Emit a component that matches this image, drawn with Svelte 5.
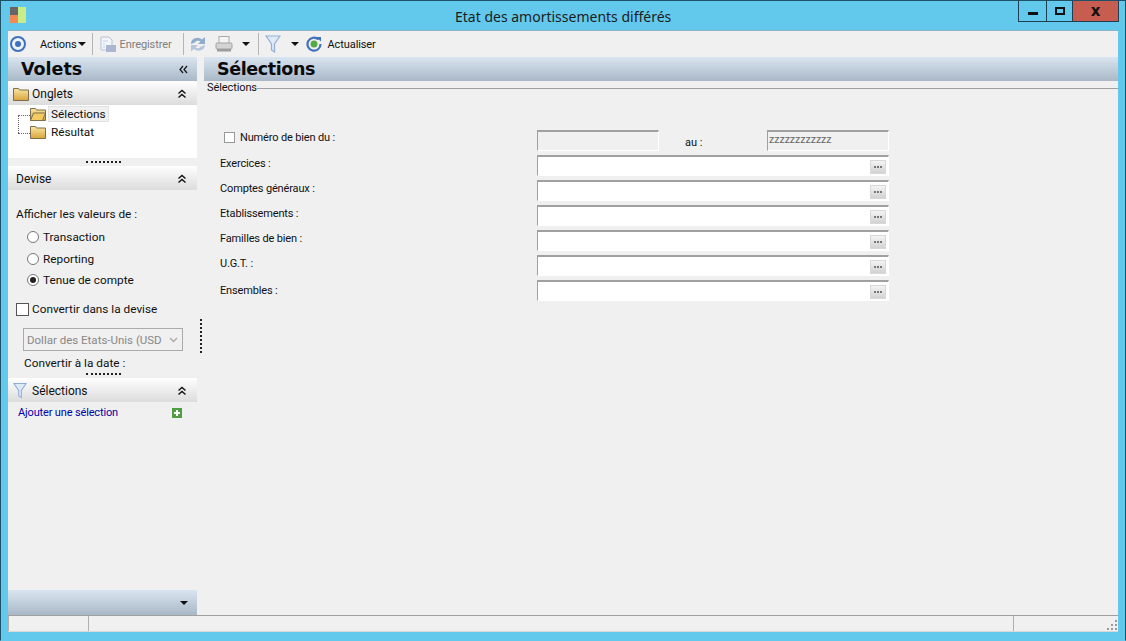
<script>
  const rows = ['Exercices :', 'Comptes généraux :', 'Etablissements :', 'Familles de bien :', 'U.G.T. :', 'Ensembles :'];
  const radios = [
    { label: 'Transaction', on: false },
    { label: 'Reporting', on: false },
    { label: 'Tenue de compte', on: true }
  ];
</script>

{#snippet chevrons()}
  <svg class="chev" width="10" height="10" viewBox="0 0 10 10"><path d="M1.500 4.500 5 1.500 8.500 4.500M1.500 8.500 5 5.500 8.500 8.500" fill="none" stroke="#111" stroke-width="1.400"/></svg>
{/snippet}
{#snippet folder(open)}
  <svg width="16" height="14" viewBox="0 0 16 14">
    <defs><linearGradient id="fg" x1="0" y1="0" x2="0" y2="1"><stop offset="0" stop-color="#f9e6a4"/><stop offset="1" stop-color="#d9a53a"/></linearGradient></defs>
    <path d="M.5 1.500h5l1 1.500h9v10.500H.5z" fill="url(#fg)" stroke="#7d6d4a"/>
    {#if open}<path d="M3.500 6h12l-3 7.500H.5z" fill="#f4cb62" stroke="#7d6d4a"/>{/if}
  </svg>
{/snippet}
{#snippet funnel(w, h)}
  <svg width={w} height={h} viewBox="0 0 16 18"><path d="M1 1h14L9.500 9v8l-3-2V9z" fill="#dfeaf6" stroke="#8fb0d6" stroke-width="1.200"/></svg>
{/snippet}
{#snippet caret()}
  <span class="caret"></span>
{/snippet}

<div class="window">
  <header class="titlebar">
    <svg class="logo" width="16" height="16" viewBox="0 0 16 16">
      <rect x="0" y="0" width="8" height="8" fill="#666"/>
      <rect x="0" y="8" width="8" height="8" fill="#f08a50"/>
      <rect x="8" y="0" width="8" height="16" fill="#c8ec88"/>
    </svg>
    <span class="title">Etat des amortissements différés</span>
    <div class="controls">
      <div class="ctl min"><span></span></div>
      <div class="ctl max"><span></span></div>
      <div class="ctl close">x</div>
    </div>
  </header>

  <div class="client">
    <nav class="toolbar">
      <svg class="home" width="18" height="18" viewBox="0 0 18 18"><circle cx="9" cy="9" r="7" fill="#eef3fb" stroke="#3f70bd" stroke-width="2"/><circle cx="9" cy="9" r="3" fill="#3f70bd"/></svg>
      <span class="tb actions">Actions</span>
      {@render caret()}
      <i class="sep s1"></i>
      <svg class="save" width="16" height="17" viewBox="0 0 16 17"><path d="M1 1h8l3 3v10H1z" fill="#f2f5fa" stroke="#b6c2d4"/><rect x="6" y="9" width="10" height="7" fill="#aab6d2"/><path d="M3 5h5M3 8h2M3 11h2" stroke="#c3cede"/></svg>
      <span class="tb disabled">Enregistrer</span>
      <i class="sep s2"></i>
      <svg class="sync" width="16" height="16" viewBox="0 0 16 16"><path d="M1 8a6.500 6 0 0 1 11-4.500L15 1v7H8l2.500-2.500a3.500 3 0 0 0-5.500 1z" fill="#8eaccc"/><path d="M15 9a6.500 6 0 0 1-11 4l-3 2.500V9h7l-2.500 2.500a3.500 3 0 0 0 5.500-1z" fill="#b4c6da"/></svg>
      <svg class="print" width="18" height="18" viewBox="0 0 18 18"><rect x="4" y="1.500" width="10" height="7" fill="#f4f4f4" stroke="#aaa"/><rect x="1" y="8" width="16" height="6" rx="1" fill="#d4d4d4" stroke="#a4a4a4"/><rect x="2" y="14" width="14" height="2.500" fill="#9c9c9c"/></svg>
      {@render caret()}
      <i class="sep s3"></i>
      <span class="tfun">{@render funnel(16, 18)}</span>
      {@render caret()}
      <svg class="refresh" width="16" height="16" viewBox="0 0 16 16"><path d="M12.500 3.500A6.500 6.500 0 1 0 14.500 8" fill="none" stroke="#3f70bd" stroke-width="2.200"/><path d="M10 1h5v4.500z" fill="#3f70bd"/><circle cx="8" cy="8" r="3.500" fill="#57a846"/></svg>
      <span class="tb refresh-label">Actualiser</span>
    </nav>

    <div class="body">
      <aside class="left">
        <div class="band head-volets"><span>Volets</span><svg width="9" height="9" viewBox="0 0 9 9"><path d="M4 1 1 4.500 4 8M8 1 5 4.500 8 8" fill="none" stroke="#111" stroke-width="1.200"/></svg></div>

        <div class="sec-head"><span class="ic">{@render folder(false)}</span><span class="sec-title">Onglets</span>{@render chevrons()}</div>
        <div class="tree">
          <div class="node first"><i class="hline"></i><span class="fo">{@render folder(true)}</span><span class="selected">Sélections</span></div>
          <div class="node"><i class="hline"></i><span class="fo">{@render folder(false)}</span><span class="plain">Résultat</span></div>
          <i class="vline"></i>
        </div>
        <div class="grip"></div>

        <div class="sec-head devise"><span class="sec-title">Devise</span>{@render chevrons()}</div>
        <div class="devise-body">
          <div class="caption">Afficher les valeurs de :</div>
          {#each radios as r}
            <div class="radio-row"><span class="radio" class:on={r.on}></span>{r.label}</div>
          {/each}
          <div class="check-row"><span class="check"></span>Convertir dans la devise</div>
          <div class="select"><span>Dollar des Etats-Unis (USD</span><svg width="9" height="6" viewBox="0 0 9 6"><path d="M1 1l3.500 3.500L8 1" fill="none" stroke="#aaa" stroke-width="1.400"/></svg></div>
          <div class="date">Convertir à la date :</div>
        </div>
        <div class="grip g2"></div>

        <div class="sec-head sel"><span class="ic">{@render funnel(14, 17)}</span><span class="sec-title">Sélections</span>{@render chevrons()}</div>
        <div class="add">
          <span>Ajouter une sélection</span>
          <svg width="10" height="10" viewBox="0 0 10 10"><rect width="10" height="10" fill="#4f9f42"/><path d="M5 2v6M2 5h6" stroke="#fff" stroke-width="2"/></svg>
        </div>
        <div class="spacer"></div>
        <div class="band foot"><span class="down"></span></div>
      </aside>

      <div class="gutter"><i></i></div>

      <main class="main">
        <div class="band head-main">Sélections</div>
        <div class="legend"><span>Sélections</span><i></i></div>
        <div class="form">
          <div class="line first-line">
            <div class="lbl num"><span class="check small"></span>Numéro de bien du :</div>
            <div class="input short"></div>
            <div class="au">au :</div>
            <div class="input short zed">zzzzzzzzzzzz</div>
          </div>
          {#each rows as r, i}
            <div class="line" class:last={i === rows.length - 1}>
              <div class="lbl">{r}</div>
              <div class="input wide"><span class="dots"><b></b><b></b><b></b></span></div>
            </div>
          {/each}
        </div>
      </main>
    </div>

    <footer class="status">
      <div class="cell a"></div>
      <div class="cell b"></div>
      <div class="cell c"><svg width="12" height="12" viewBox="0 0 12 12" fill="#9a9a9a"><rect x="9" y="1" width="2" height="2"/><rect x="5" y="5" width="2" height="2"/><rect x="9" y="5" width="2" height="2"/><rect x="1" y="9" width="2" height="2"/><rect x="5" y="9" width="2" height="2"/><rect x="9" y="9" width="2" height="2"/></svg></div>
    </footer>
  </div>
</div>

<style>
  :global(body) { margin: 0; }
  .window {
    width: 1126px; height: 641px; box-sizing: border-box;
    background: #63c9ec; border: 1px solid #1f5166; border-bottom-color: #63c9ec;
    display: flex; flex-direction: column; overflow: hidden;
    font: 11.800px/16px Roboto, sans-serif; color: #111;
  }
  .titlebar { height: 29px; flex: none; display: flex; align-items: flex-start; position: relative; }
  .logo { margin: 6px 0 0 9px; }
  .title { position: absolute; left: 454px; top: 6px; font: 14px/19px "Noto Sans", sans-serif; color: #1c1c1c; }
  .controls { margin-left: auto; margin-right: 6px; display: flex; height: 21px; border: 1px solid #1f3f50; border-top: 0; box-sizing: border-box; }
  .ctl { display: flex; align-items: center; justify-content: center; height: 20px; }
  .min { width: 27px; border-right: 1px solid #1f3f50; }
  .min span { width: 10px; height: 3px; margin-top: 5px; background: #111; }
  .max { width: 25px; border-right: 1px solid #1f3f50; }
  .max span { width: 6px; height: 4px; border: 2px solid #111; }
  .close { width: 45px; background: #c75d50; font: bold 15px/16px "DejaVu Sans", sans-serif; color: #111; }

  .client { flex: 1; margin: 0 7px 8px 7px; display: flex; flex-direction: column; background: #f0f0f0; min-height: 0; border-top: 1px solid #8fb3c6; }
  .toolbar { height: 26px; flex: none; display: flex; align-items: center; background: #f0f0f0; }
  .tb { white-space: nowrap; font-size: 11px; letter-spacing: -0.1px; padding-top: 1px; }
  .home { margin-left: 1px; }
  .actions { margin-left: 13px; }
  .caret { width: 0; height: 0; border: 4px solid transparent; border-top-color: #111; border-bottom: 0; margin-left: 1px; }
  .sep { width: 1px; height: 22px; background: #b5b5b5; }
  .s1 { margin-left: 6px; }
  .save { margin-left: 7px; }
  .disabled { color: #7e7e7e; margin-left: 4px; }
  .s2 { margin-left: 11px; }
  .sync { margin-left: 6px; }
  .print { margin-left: 9px; }
  .print + .caret { margin-left: 9px; }
  .s3 { margin-left: 8px; }
  .tfun { margin-left: 6px; display: flex; }
  .tfun + .caret { margin-left: 10px; }
  .refresh { margin-left: 7px; }
  .refresh-label { margin-left: 6px; }

  .body { flex: 1; display: flex; min-height: 0; }
  .band { background: linear-gradient(#d9e5f0, #a9b8c8); display: flex; align-items: center; flex: none; }
  .left { width: 189px; flex: none; display: flex; flex-direction: column; }
  .head-volets { height: 24px; padding: 1px 9px 0 13px; box-sizing: border-box; justify-content: space-between; }
  .head-volets span { font: bold 17.500px/23px "DejaVu Sans", sans-serif; color: #0a0a0a; }
  .sec-head { height: 24px; flex: none; display: flex; align-items: center; padding: 1px 10px 0 5px; box-sizing: border-box; background: linear-gradient(#fefefe, #dcdcdc); }
  .sec-title { flex: 1; font-size: 12px; }
  .ic { width: 19px; display: flex; justify-content: flex-start; }
  .devise { padding-left: 8px; }
  .tree { height: 53px; background: #fff; position: relative; flex: none; }
  .node { height: 18px; display: flex; align-items: center; position: relative; padding-left: 22px; }
  .hline { position: absolute; left: 10px; top: 10px; width: 12px; border-top: 1px dotted #666; }
  .vline { position: absolute; left: 10px; top: 10px; height: 18px; border-left: 1px dotted #666; }
  .fo { display: flex; width: 19px; }
  .selected { background: #f0f0f0; border: 1px solid #e2e2e2; padding: 0 2px; line-height: 14px; margin-left: -1px; }
  .plain { padding-left: 2px; }
  .grip { height: 8px; flex: none; background: #f0f0f0; position: relative; }
  .grip::after { content: ""; position: absolute; left: 78px; top: 3px; width: 35px; border-top: 2px dotted #222; }
  .devise-body { display: flex; flex-direction: column; height: 183px; padding-left: 8px; box-sizing: border-box; flex: none; overflow: hidden; }
  .caption { margin-top: 16px; height: 16px; }
  .radio-row { display: flex; align-items: center; padding-left: 11px; height: 16px; margin-top: 6px; }
  .caption + .radio-row { margin-top: 7px; }
  .radio-row + .radio-row + .radio-row { margin-top: 5px; }
  .radio { width: 12px; height: 12px; box-sizing: border-box; border: 1px solid #777; border-radius: 50%; background: #fff; margin-right: 4px; position: relative; }
  .radio.on::after { content: ""; position: absolute; inset: 2px; border-radius: 50%; background: #222; }
  .check-row { display: flex; align-items: center; margin-top: 13px; height: 16px; }
  .check { width: 13px; height: 13px; box-sizing: border-box; border: 1px solid #555; background: #fff; margin-right: 3px; flex: none; }
  .check.small { width: 11px; height: 11px; border-color: #999; margin: 0 5px 0 4px; }
  .select { width: 160px; height: 23px; box-sizing: border-box; margin: 11px 0 0 7px; border: 1px solid #aaa; display: flex; align-items: center; justify-content: space-between; padding: 0 4px 0 3px; background: #f0f0f0; color: #888; white-space: nowrap; font-size: 11.500px; }
  .select svg { flex: none; }
  .date { margin: 4px 0 0 8px; }
  .g2 { height: 5px; }
  .g2::after { top: 0; }
  .add { display: flex; justify-content: space-between; align-items: center; padding: 1px 15px 0 10px; height: 21px; box-sizing: border-box; font-size: 11px; letter-spacing: -0.15px; color: #0000a8; }
  .spacer { flex: 1; }
  .foot { height: 25px; justify-content: flex-end; padding-right: 9px; }
  .down { width: 0; height: 0; border: 4px solid transparent; border-top-color: #111; border-bottom: 0; }

  .gutter { width: 7px; flex: none; padding-top: 262px; box-sizing: border-box; }
  .gutter i { display: block; height: 34px; width: 0; margin-left: 3px; border-left: 2px dotted #222; }

  .main { flex: 1; display: flex; flex-direction: column; min-width: 0; }
  .head-main { height: 24px; padding: 1px 0 0 13px; box-sizing: border-box; font: bold 17.500px/23px "DejaVu Sans", sans-serif; letter-spacing: -0.4px; color: #0a0a0a; flex: none; }
  .legend { display: flex; align-items: center; height: 14px; padding-left: 3px; font-size: 11px; letter-spacing: -0.1px; }
  .legend i { flex: 1; border-top: 1px solid #a0a0a0; }
  .form { padding: 35px 0 0 16px; display: flex; flex-direction: column; gap: 4px; }
  .line { display: flex; align-items: center; height: 21px; }
  .lbl { width: 317px; flex: none; font-size: 11px; letter-spacing: -0.15px; display: flex; align-items: center; margin-top: -4px; }
  .lbl.num { margin-top: -6px; }
  .last .lbl { margin-top: 0; }
  .input { box-sizing: border-box; height: 21px; border-top: 2px solid #a0a0a0; border-left: 1px solid #a0a0a0; border-right: 1px solid #fff; border-bottom: 1px solid #fff; }
  .short { width: 122px; background: #f0f0f0; font-size: 10.500px; line-height: 16px; color: #666; padding-left: 1px; }
  .wide { width: 352px; background: #fff; display: flex; align-items: center; justify-content: flex-end; padding-right: 2px; }
  .au { padding-left: 26px; font-size: 11px; margin-top: 4px; width: 82px; }
  .dots { width: 16px; height: 14px; background: linear-gradient(#f4f4f4, #d2d2d2); border: 1px solid #d8d8d8; box-sizing: border-box; display: flex; align-items: center; justify-content: center; gap: 1px; margin-top: 1px; }
  .dots b { width: 2px; height: 2px; background: #777; }

  .status { height: 17px; flex: none; display: flex; border-top: 1px solid #a0a0a0; box-sizing: border-box; border-bottom: 1px solid #d8d8d8; }
  .cell { border-left: 1px solid #b0b0b0; }
  .a { width: 79px; }
  .b { width: 924px; }
  .c { flex: 1; display: flex; justify-content: flex-end; align-items: flex-end; }
</style>
